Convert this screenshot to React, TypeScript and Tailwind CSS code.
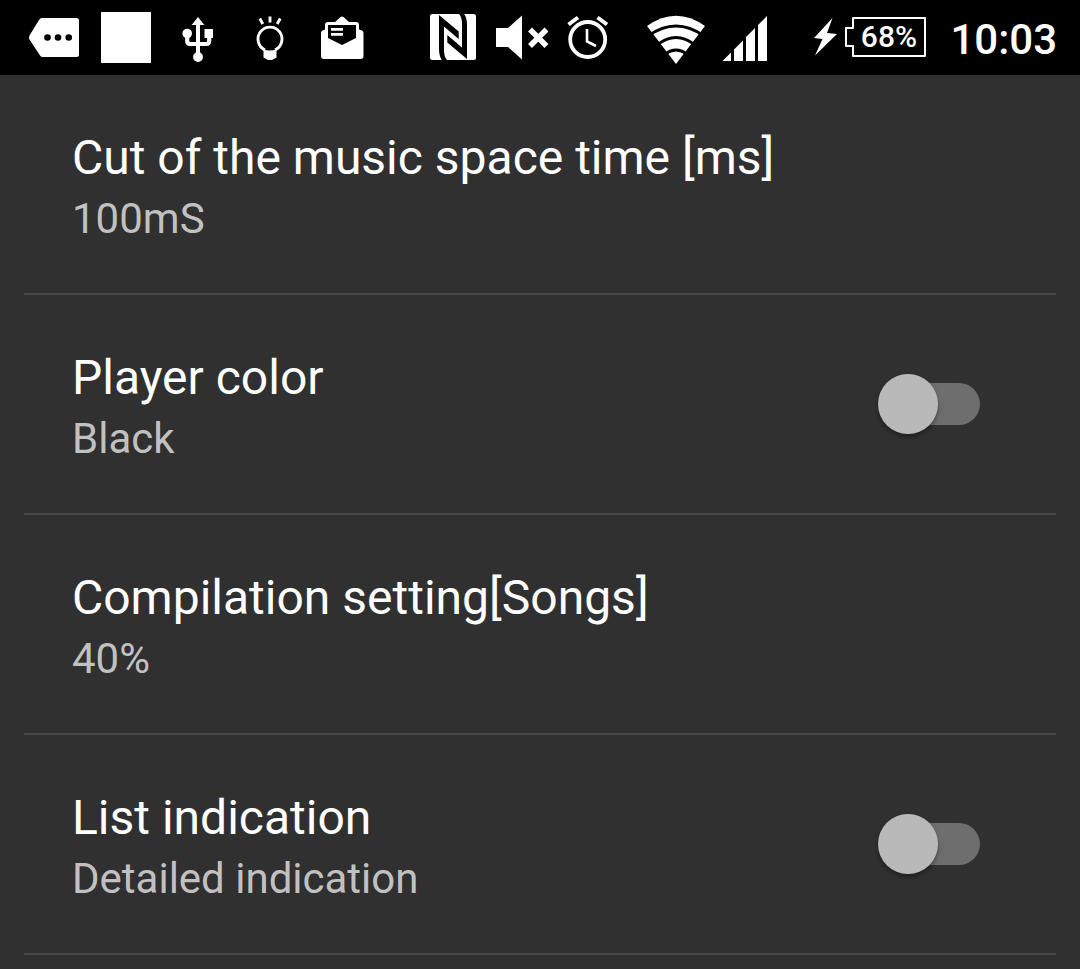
import { useState } from "react";

type Setting = { id: string; title: string; summary: string; toggle?: boolean };

const settings: Setting[] = [
  { id: "cut", title: "Cut of the music space time [ms]", summary: "100mS" },
  { id: "color", title: "Player color", summary: "Black", toggle: true },
  { id: "compilation", title: "Compilation setting[Songs]", summary: "40%" },
  { id: "list", title: "List indication", summary: "Detailed indication", toggle: true },
];

// Half of the NFC mark; the other half is the same shape turned by 180 degrees.
const nfcHalf = "M439 15L458.700 31.500V39L444 26.500V50Q444 57 447 60H441.800Q439 56 439 49Z";

function StatusBar() {
  return (
    <header className="flex h-[75px] items-center justify-between bg-black pl-[18px] pr-[23px] text-white">
      <div className="flex">
        <svg className="h-[75px] w-[72px]" viewBox="18 0 72 75" fill="currentColor" aria-hidden="true">
          <path d="M41 18H76.500Q79 18 79 20.500V54.500Q79 57 76.500 57H43Q41 57 40 55.500L29.500 39.500Q28.500 37.500 29.500 35.500L39 20Q40 18 42 18Z" />
          <g fill="#000">
            <circle cx="47.500" cy="37.500" r="3.300" />
            <circle cx="58" cy="37.500" r="3.300" />
            <circle cx="68.700" cy="37.500" r="3.300" />
          </g>
        </svg>
        <svg className="h-[75px] w-[72px]" viewBox="90 0 72 75" fill="currentColor" aria-hidden="true">
          <path d="M101 12h50v51h-50z" />
        </svg>
        <svg className="h-[75px] w-[72px]" viewBox="162 0 72 75" fill="currentColor" aria-hidden="true">
          <path d="M198 17l6.300 8h-12.600z" />
          <path d="M196 24h4v30h-4z" />
          <circle cx="187.200" cy="33.500" r="4.800" />
          <path d="M204.500 29h8.500v9h-8.500z" />
          <circle cx="198" cy="57" r="4.900" />
          <path d="M187.200 36v5q0 3 3 3h16q3 0 3-3v-5" fill="none" stroke="currentColor" strokeWidth="4.200" />
        </svg>
        <svg className="h-[75px] w-[72px]" viewBox="234 0 72 75" fill="none" stroke="currentColor" aria-hidden="true">
          <path d="M259.800 18.500l3 5.500M270 16.500v6M280.200 18.500l-3 5.500" strokeWidth="2.900" />
          <path d="M265 50a12 12 0 1 1 10 0" strokeWidth="2.900" />
          <path d="M263.500 49.500q6.500 2 13 0v8l-4.500 2.500h-4l-4.500-2.500z" fill="currentColor" stroke="none" />
        </svg>
        <svg className="h-[75px] w-[72px]" viewBox="306 0 72 75" fill="currentColor" aria-hidden="true">
          <path d="M325 25q0-3 3-3h7l5.500-5q1.500-1 3 0l5.500 5h7q3 0 3 3v4.500l3 1q1.500.7 1.500 3V56q0 3-3 3h-36.500q-3 0-3-3V33.500q0-2.300 1.500-3l2.500-1z" />
          <path d="M328 25h28v13l-14 7-14-7z" fill="#000" />
          <path d="M331 28h12v2.800h-12zM331 33h12v2.800h-12z" />
        </svg>
      </div>
      <div className="flex items-center">
        <svg className="h-[75px] w-[70px]" viewBox="418 0 70 75" aria-hidden="true">
          <rect x="430" y="14" width="46" height="46" rx="2.500" fill="currentColor" />
          <path d={nfcHalf} />
          <path d={nfcHalf} transform="rotate(180 453 37)" />
        </svg>
        <svg className="h-[75px] w-[70px]" viewBox="488 0 70 75" fill="currentColor" aria-hidden="true">
          <path d="M496 28h12l14-12.500v44L508 47h-12z" />
          <path d="M530 29.500l16.500 16.500M546.500 29.500L530 46" stroke="currentColor" strokeWidth="5.500" />
        </svg>
        <svg className="h-[75px] w-[74px]" viewBox="558 0 74 75" fill="none" stroke="currentColor" aria-hidden="true">
          <circle cx="587.700" cy="39.500" r="17.500" strokeWidth="3.800" />
          <path d="M568.500 24.500l9.500-7M607 24.500l-9.500-7" strokeWidth="4" />
          <path d="M587 29v12.500l9 4.500" strokeWidth="2.600" />
        </svg>
        <svg className="h-[75px] w-[86px]" viewBox="632 0 86 75" aria-hidden="true">
          <path d="M647 26Q676 5.500 705 26L676 64z" fill="currentColor" />
          <path d="M648 36Q676 16 704 36M657 45Q676 30 695 45M665 54Q676 46 687 54" fill="none" stroke="#000" strokeWidth="2.900" />
        </svg>
        <svg className="h-[75px] w-[90px]" viewBox="718 0 90 75" fill="currentColor" aria-hidden="true">
          <path d="M722.500 61l8.500-8.500V61zM734 49.500l9-9V61h-9zM746 37l9-9v33h-9zM758 25l9-9v45h-9z" />
        </svg>
        <svg className="h-[75px] w-[37px]" viewBox="808 0 37 75" fill="currentColor" aria-hidden="true">
          <path d="M832.500 18L814 38l8.500 1L815 55.500 837 34l-10-1z" />
        </svg>
        <div className="relative mb-px flex h-10 w-[81px] items-center justify-center pl-[6px]">
          <svg className="absolute inset-0 h-10 w-[81px]" viewBox="845 17 81 40" fill="none" stroke="currentColor" strokeWidth="2" strokeLinejoin="round" aria-hidden="true">
            <path d="M853 18H925V56H853V46H846V28H853Z" />
          </svg>
          <span className="text-[30px] leading-10 font-medium">68%</span>
        </div>
        <time className="ml-6 pt-1 text-[42px] leading-[48px] font-medium">10:03</time>
      </div>
    </header>
  );
}

function SettingText({ title, summary }: { title: string; summary: string }) {
  return (
    <span className="block pt-[10px]">
      <span className="block text-[48px] leading-[60px] text-white">{title}</span>
      <span className="block text-[42px] leading-[62px] text-[#c1c1c1]">{summary}</span>
    </span>
  );
}

function ToggleRow({ setting }: { setting: Setting }) {
  const [on, setOn] = useState(false);
  return (
    <label className="flex min-h-[218px] cursor-pointer items-center justify-between pl-12 pr-[76px]">
      <SettingText title={setting.title} summary={setting.summary} />
      <span className="relative flex h-[60px] w-[102px] shrink-0 items-center justify-end">
        <input
          type="checkbox"
          role="switch"
          className="peer sr-only"
          checked={on}
          onChange={(e) => setOn(e.target.checked)}
        />
        <span className="h-[42px] w-[82px] rounded-full bg-[#6e6e6e]" />
        <span className="absolute top-0 left-0 size-[60px] rounded-full bg-[#b9b9b9] shadow-[0_3px_4px_rgba(0,0,0,0.35)] peer-checked:left-[42px]" />
      </span>
    </label>
  );
}

export default function App() {
  return (
    <div className="min-h-screen bg-[#303030] font-[Roboto,sans-serif]">
      <StatusBar />
      <main>
        <ul>
          {settings.map((s) => (
            <li key={s.id} className="mx-6 border-b-2 border-[#494949]">
              {s.toggle ? (
                <ToggleRow setting={s} />
              ) : (
                <button type="button" className="flex min-h-[218px] w-full items-center px-12 text-left">
                  <SettingText title={s.title} summary={s.summary} />
                </button>
              )}
            </li>
          ))}
        </ul>
      </main>
    </div>
  );
}
